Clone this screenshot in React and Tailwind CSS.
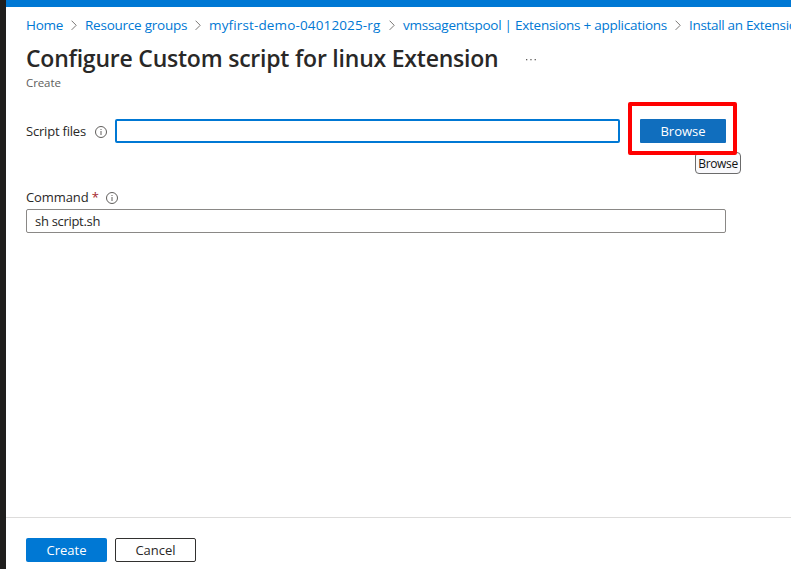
const crumbs = [
  { label: 'Home', style: 'w-[37px] tracking-[-0.3px]' },
  { label: 'Resource groups', style: 'w-[102px] tracking-[-0.24px]' },
  { label: 'myfirst-demo-04012025-rg', style: 'w-[172px] tracking-[0.14px]' },
  { label: 'vmssagentspool | Extensions + applications', style: 'w-[264px] tracking-[-0.26px]' },
  { label: 'Install an Extension', style: 'w-[130px] tracking-[-0.32px]' },
];

function Chevron() {
  return (
    <svg className="mx-2 h-3 w-1.5 shrink-0" viewBox="0 0 6 12" fill="none" stroke="#7a7876">
      <path d="M0.6 1.7 5.2 6.3 0.6 10.9" />
    </svg>
  );
}

function InfoIcon() {
  return (
    <svg className="h-3 w-3 shrink-0" viewBox="0 0 12 12" fill="none" stroke="#605e5c">
      <circle cx="6" cy="6" r="5.5" />
      <path d="M6 5V9M6 3V4" />
    </svg>
  );
}

export default function App() {
  return (
    <div className="flex h-[569px] w-[791px] overflow-hidden bg-white font-['Open_Sans','Noto_Sans',sans-serif] text-[13px] text-[#292827]">
      <div className="w-1.5 shrink-0 bg-[#1f1e1d]" />
      <div className="flex min-w-0 flex-1 flex-col">
        <div className="h-[7px] shrink-0 bg-[#0078d4]" />
        <nav className="mt-2 flex h-5 shrink-0 items-center overflow-hidden pl-5 text-[13.5px] text-[#0078d4]">
          {crumbs.map((crumb, i) => (
            <div key={crumb.label} className="flex shrink-0 items-center">
              {i > 0 && <Chevron />}
              <a className={`block whitespace-nowrap ${crumb.style}`}>{crumb.label}</a>
            </div>
          ))}
        </nav>
        <header className="pl-5">
          <div className="mt-2 flex h-8 items-center">
            <h1 className="w-[473px] whitespace-nowrap pb-0.5 text-[23px] leading-8 font-semibold tracking-[-0.22px]">
              Configure Custom script for linux Extension
            </h1>
            <svg className="ml-[26px] h-2 w-3" viewBox="0 0 12 8" fill="#605e5c">
              <rect x="1" y="4" width="1.3" height="1.3" />
              <rect x="5.3" y="4" width="1.3" height="1.3" />
              <rect x="9.6" y="4" width="1.3" height="1.3" />
            </svg>
          </div>
          <div className="h-4 text-[11.5px] leading-4 tracking-[-0.1px] text-[#605e5c]">Create</div>
        </header>

        <main className="flex-1 pl-5">
          <div className="mt-7 flex h-6 items-center">
            <label className="w-[69px] whitespace-nowrap pt-0.5 tracking-[-0.2px]">Script files</label>
            <div className="pt-0.5">
              <InfoIcon />
            </div>
            <div className="ml-2 h-6 w-[505px] rounded-[2px] border-2 border-[#0078d4]" />
            <div className="relative ml-5">
              <button className="block h-6 w-[86px] rounded-[1px] bg-[#106ebe] pt-px font-medium text-white">
                Browse
              </button>
              <div className="absolute top-[33px] left-[55px] flex h-[22px] w-[46px] items-center justify-center rounded-[4px] border border-[#6b6b6b] bg-[#f9f9fc] pt-px text-[12px] tracking-[-0.35px] text-[#111]">
                Browse
              </div>
              <div className="absolute -top-[17.5px] -left-[12.5px] h-[53px] w-[109px] rounded-[2px] border-4 border-[#ff0000]" />
            </div>
          </div>
          <div className="mt-[45px] flex h-5 items-center">
            <label className="w-[80px] whitespace-nowrap tracking-[-0.1px]">
              Command <span className="text-[#a4262c]">*</span>
            </label>
            <InfoIcon />
          </div>
          <div className="mt-px flex h-6 w-[700px] items-center rounded-[2px] border border-[#8a8886] pt-px pl-2 tracking-[-0.3px]">
            sh script.sh
          </div>
        </main>

        <footer className="flex h-[52px] shrink-0 gap-2 border-t border-[#dddcdb] pt-5 pl-5">
          <button className="h-6 w-[81px] rounded-[2px] bg-[#0078d4] pt-px text-white">Create</button>
          <button className="h-6 w-[81px] rounded-[2px] border border-[#323130] pt-px">Cancel</button>
        </footer>
      </div>
    </div>
  );
}
